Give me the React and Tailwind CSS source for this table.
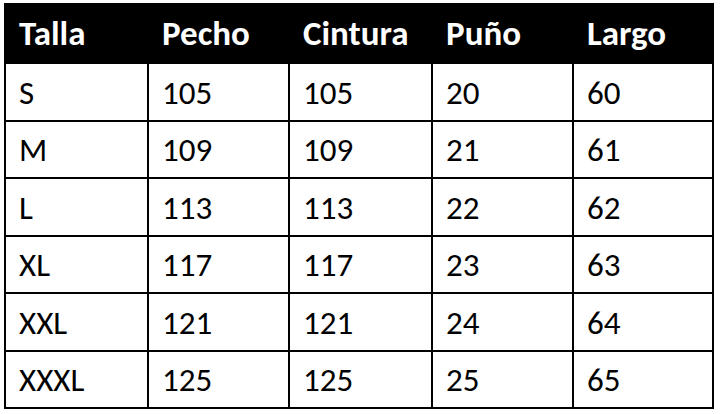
const headers = ["Talla", "Pecho", "Cintura", "Puño", "Largo"];

const rows = [
  ["S", "105", "105", "20", "60"],
  ["M", "109", "109", "21", "61"],
  ["L", "113", "113", "22", "62"],
  ["XL", "117", "117", "23", "63"],
  ["XXL", "121", "121", "24", "64"],
  ["XXXL", "125", "125", "25", "65"],
];

const font = { fontFamily: "Carlito, Calibri, Lato, 'Open Sans', sans-serif" };

export default function App() {
  return (
    <div className="w-[720px] h-[414px] bg-white pl-[4px] pt-[3px]" style={font}>
      <div className="inline-grid grid-cols-[141px_139px_141px_139px_138px] grid-rows-[57px_56px_55px_56px_55px_56px_55px] gap-[2px] p-[2px] bg-black">
        {headers.map((h) => (
          <div
            key={h}
            className="bg-black text-white font-bold text-[35px] leading-none flex items-center pl-[13px]"
          >
            {h}
          </div>
        ))}
        {rows.map((r) =>
          r.map((c, i) => (
            <div
              key={r[0] + i}
              className="bg-white text-black text-[33px] leading-none flex items-center pl-[13px] pt-[2px]"
            >
              {c}
            </div>
          ))
        )}
      </div>
    </div>
  );
}
